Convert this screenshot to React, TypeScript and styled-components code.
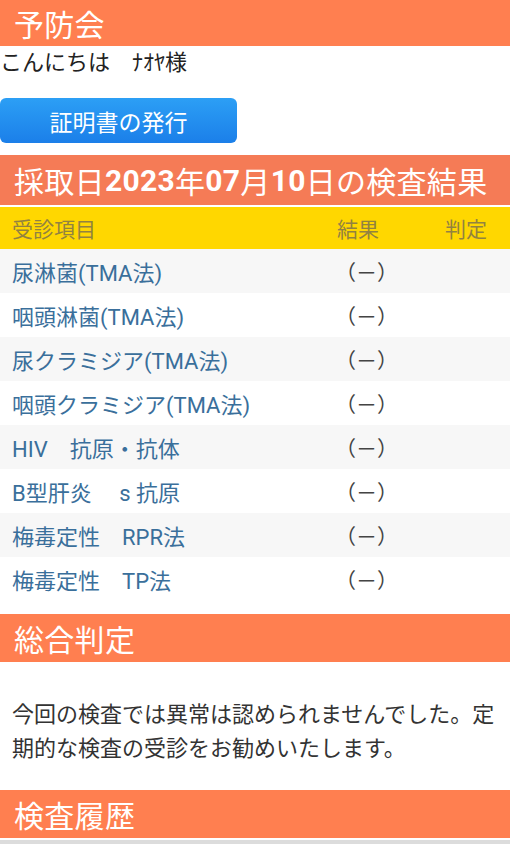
import styled, { createGlobalStyle } from "styled-components";

const GlobalStyle = createGlobalStyle`
  html, body {
    margin: 0;
    padding: 0;
    background: #fff;
  }
  body {
    font-family: Roboto, "Noto Sans CJK JP", sans-serif;
    font-size: 22px;
    color: #222;
  }
`;

type Exam = { name: string; result: string; judge: string };

const exams: Exam[] = [
  { name: "尿淋菌(TMA法)", result: "（－）", judge: "" },
  { name: "咽頭淋菌(TMA法)", result: "（－）", judge: "" },
  { name: "尿クラミジア(TMA法)", result: "（－）", judge: "" },
  { name: "咽頭クラミジア(TMA法)", result: "（－）", judge: "" },
  { name: "HIV　抗原・抗体", result: "（－）", judge: "" },
  { name: "B型肝炎　 s 抗原", result: "（－）", judge: "" },
  { name: "梅毒定性　RPR法", result: "（－）", judge: "" },
  { name: "梅毒定性　TP法", result: "（－）", judge: "" },
];

const App = () => {
  return (
    <>
      <GlobalStyle />
      <StPage>
        <StHeader $height={46}>予防会</StHeader>
        <StGreeting>こんにちは　ﾅｵﾔ様</StGreeting>
        <StButton type="button">証明書の発行</StButton>

        <StHeader $height={50} $bg="#f57b56" $mt={12}>
          採取日<b>2023</b>年<b>07</b>月<b>10</b>日の検査結果
        </StHeader>

        <StTable>
          <StHeadRow>
            <span>受診項目</span>
            <span>結果</span>
            <span>判定</span>
          </StHeadRow>
          {exams.map((exam, i) => (
            <StRow key={exam.name} $odd={i % 2 === 0}>
              <StName>{exam.name}</StName>
              <StResult>{exam.result}</StResult>
              <span>{exam.judge}</span>
            </StRow>
          ))}
        </StTable>

        <StHeader $height={48} $mt={13}>総合判定</StHeader>
        <StMessage>
          今回の検査では異常は認められませんでした。定期的な検査の受診をお勧めいたします。
        </StMessage>

        <StHeader $height={48}>検査履歴</StHeader>
        <StDivider />
      </StPage>
    </>
  );
};

export default App;

const StPage = styled.div`
  display: flex;
  flex-direction: column;
  width: 510px;
`;

const StHeader = styled.div<{ $height: number; $bg?: string; $mt?: number }>`
  display: flex;
  align-items: center;
  height: ${({ $height }) => $height}px;
  margin-top: ${({ $mt }) => $mt ?? 0}px;
  padding-left: 14px;

  background-color: ${({ $bg }) => $bg ?? "#ff7f50"};
  color: #fff;
  font-size: 30px;
  letter-spacing: 0.3px;
  white-space: nowrap;

  b {
    font-weight: 700;
  }
`;

const StGreeting = styled.div`
  height: 32px;
  line-height: 34px;
  font-size: 22px;
  color: #222;
`;

const StButton = styled.button`
  width: 237px;
  height: 45px;
  margin-top: 20px;
  padding: 0;

  background: linear-gradient(#2c9ff5, #1b7fe9);
  border: none;
  border-radius: 6px;
  color: #fff;
  font-family: inherit;
  font-size: 23px;
`;

const StTable = styled.div`
  display: flex;
  flex-direction: column;
  margin-top: 2px;
`;

const StHeadRow = styled.div`
  display: grid;
  grid-template-columns: 325px 108px 1fr;
  align-items: center;
  height: 42px;
  padding-left: 12px;

  background-color: #ffd700;
  color: #928240;
  font-size: 21px;
`;

const StRow = styled.div<{ $odd: boolean }>`
  display: grid;
  grid-template-columns: 323px 110px 1fr;
  align-items: center;
  height: 44px;
  padding-left: 12px;

  background-color: ${({ $odd }) => ($odd ? "#f7f7f7" : "#fff")};
`;

const StName = styled.span`
  color: #3a6f9b;
  font-size: 22px;
  white-space: pre;
`;

const StResult = styled.span`
  color: #444;
  font-size: 21px;
`;

const StMessage = styled.p`
  margin: 0;
  padding: 36px 12px 24px;
  line-height: 34px;
  font-size: 22px;
  color: #333;
`;

const StDivider = styled.div`
  height: 8px;
  margin-top: 2px;
  background-color: #dcdcdc;
`;
